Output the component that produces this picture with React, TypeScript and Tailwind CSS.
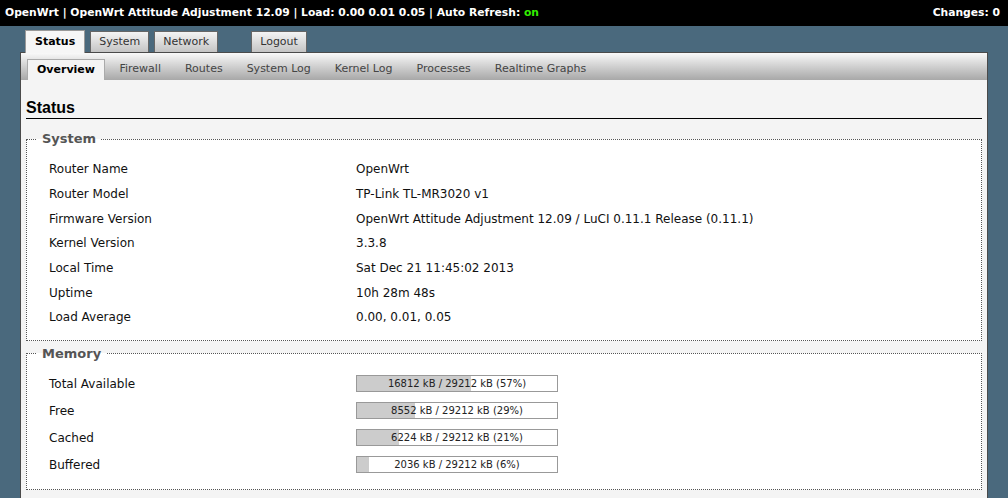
const sysRows = [
  ["Router Name", "OpenWrt"],
  ["Router Model", "TP-Link TL-MR3020 v1"],
  ["Firmware Version", "OpenWrt Attitude Adjustment 12.09 / LuCI 0.11.1 Release (0.11.1)"],
  ["Kernel Version", "3.3.8"],
  ["Local Time", "Sat Dec 21 11:45:02 2013"],
  ["Uptime", "10h 28m 48s"],
  ["Load Average", "0.00, 0.01, 0.05"],
];

const memRows: [string, number, number][] = [
  ["Total Available", 16812, 57],
  ["Free", 8552, 29],
  ["Cached", 6224, 21],
  ["Buffered", 2036, 6],
];

const subTabs = ["Firewall", "Routes", "System Log", "Kernel Log", "Processes", "Realtime Graphs"];

const App = () => {
  return (
    <div className="min-h-screen bg-[#4a697d] font-['DejaVu_Sans',Verdana,sans-serif] text-[#111]">
      {/* Header */}
      <header className="h-[26px] bg-black text-white font-bold text-[10.75px] flex items-center justify-between pl-[5px] pr-[8px]">
        <span>
          OpenWrt | OpenWrt Attitude Adjustment 12.09 | Load: 0.00 0.01 0.05 | Auto Refresh:{" "}
          <span className="text-[#33ee00]">on</span>
        </span>
        <span>Changes: 0</span>
      </header>

      <div className="px-[20px] pb-[40px]">
        {/* Main tabs */}
        <div className="flex items-end gap-[5px] pl-[5px] h-[26px]">
          <div className="relative z-10 -mb-px h-[23px] pt-[1px] px-[9px] flex items-center bg-[#f6f6f6] border border-b-0 border-[#999] font-bold text-[11px] text-black">
            Status
          </div>
          <div className="h-[21px] pt-[1px] px-[8px] flex items-center bg-gradient-to-b from-[#f4f4f4] to-[#c4c4c4] border border-b-0 border-[#666] text-[11px] text-[#333]">
            System
          </div>
          <div className="h-[21px] pt-[1px] px-[8px] flex items-center bg-gradient-to-b from-[#f4f4f4] to-[#c4c4c4] border border-b-0 border-[#666] text-[11px] text-[#333]">
            Network
          </div>
          <div className="ml-[28px] h-[21px] pt-[1px] px-[8px] flex items-center bg-gradient-to-b from-[#f4f4f4] to-[#c4c4c4] border border-b-0 border-[#666] text-[11px] text-[#333]">
            Logout
          </div>
        </div>

        {/* Panel */}
        <div className="border border-[#4a4a4a] bg-[#f4f4f4]">
          <div className="h-[27px] bg-gradient-to-b from-[#f9f9f9] to-[#a8a8a8] flex items-end gap-[5px] pl-[6px] text-[11px]">
            <div className="h-[21px] px-[9px] flex items-center bg-[#f4f4f4] border border-b-0 border-[#aaa] font-bold text-black">
              Overview
            </div>
            {subTabs.map((t) => (
              <div key={t} className="h-[21px] px-[9.5px] flex items-center text-[#444]">
                {t}
              </div>
            ))}
          </div>

          <div className="px-[5px] pb-[20px]">
            <h2 className="mt-[18px] h-[21px] leading-[20px] border-b border-black font-['Liberation_Sans',Arial,sans-serif] font-bold text-[16px] text-black">
              Status
            </h2>

            <fieldset className="mt-[12px] border border-dotted border-[#555] bg-white px-[10px] pt-[10px] pb-[10px]">
              <legend className="px-[5px] text-[13px] leading-[16px] font-bold text-[#555]">System</legend>
              {sysRows.map(([k, v]) => (
                <div key={k} className="flex items-center h-[24.67px] pl-[12px] text-[12px]">
                  <div className="w-[307px] shrink-0">{k}</div>
                  <div>{v}</div>
                </div>
              ))}
            </fieldset>

            <fieldset className="mt-[5px] border border-dotted border-[#555] bg-white px-[10px] pt-[8.5px] pb-[11px]">
              <legend className="px-[5px] text-[13px] leading-[16px] font-bold text-[#555]">Memory</legend>
              {memRows.map(([k, used, pct]) => (
                <div key={k} className="flex items-center h-[27px] pl-[12px] text-[12px]">
                  <div className="w-[307px] shrink-0">{k}</div>
                  <div
                    className="w-[202px] h-[17px] border border-[#999] text-[10px] leading-[15px] text-center text-[#222]"
                    style={{ background: `linear-gradient(to right, #cccccc ${pct}%, #ffffff ${pct}%)` }}
                  >
                    {used} kB / 29212 kB ({pct}%)
                  </div>
                </div>
              ))}
            </fieldset>
          </div>
        </div>
      </div>
    </div>
  );
};

export default App;
